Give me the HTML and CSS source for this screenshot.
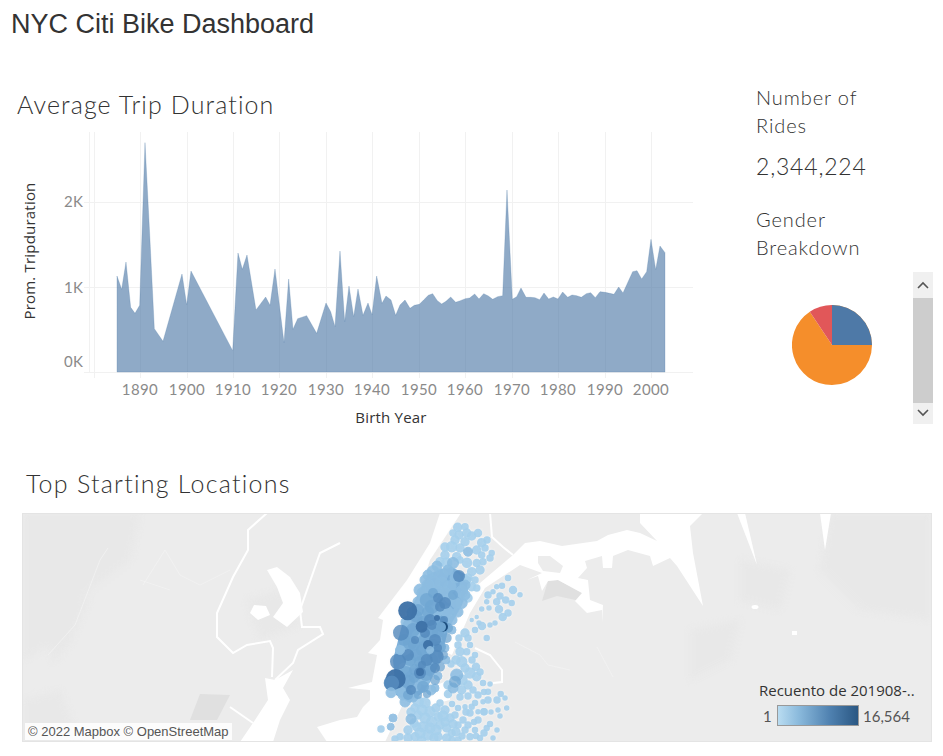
FILE: index.html
```html
<!DOCTYPE html>
<html lang="en">
<head>
<meta charset="utf-8">
<title>NYC Citi Bike Dashboard</title>
<link rel="stylesheet" href="styles.css">
</head>
<body>
<h1 class="page-title">NYC Citi Bike Dashboard</h1>
<div class="top-row">
  <section class="trend">
    <h2 class="viz-title">Average Trip Duration</h2>
    <svg class="chart" viewBox="0 131 720 310" width="720" height="310">
      <g class="grid">
        <path d="M84 202.5H693M84 287.5H693M84 372.5H693"/>
        <path d="M89.5 132V372M94.5 132V378M140.5 132V378M187.5 132V378M233.5 132V378M279.5 132V378M326.5 132V378M372.5 132V378M419.5 132V378M465.5 132V378M512.5 132V378M558.5 132V378M605.5 132V378M651.5 132V378"/>
      </g>
      <polygon class="area" transform="translate(0 80) scale(.33333)" points="351,876 351,588 365,628 378,546 392,682 405,700 419,676 435,188 449,462 463,746 489,784 546,582 560,674 573,573 698,812 714,519 727,568 741,525 768,690 797,651 810,676 825,567 852,788 866,597 879,748 893,716 920,707 950,760 978,669 992,695 1005,740 1020,513 1034,725 1047,618 1061,710 1074,627 1089,706 1104,669 1116,704 1130,588 1146,670 1158,648 1173,660 1187,706 1200,675 1215,660 1230,685 1243,676 1258,673 1271,660 1285,646 1298,641 1312,662 1325,672 1338,664 1352,651 1367,667 1381,662 1396,656 1409,654 1424,642 1437,657 1451,641 1465,648 1478,658 1493,650 1508,647 1521,330 1537,658 1550,650 1563,624 1578,652 1592,652 1605,653 1619,659 1632,639 1646,657 1660,651 1674,657 1688,636 1703,652 1716,645 1730,647 1744,652 1759,641 1772,638 1786,653 1800,635 1815,637 1829,640 1842,643 1856,621 1869,639 1884,606 1898,575 1911,572 1925,597 1940,575 1953,478 1967,569 1980,498 1995,518 1995,876"/>
      <g class="tick">
        <text x="64" y="207">2K</text>
        <text x="64" y="293">1K</text>
        <text x="64" y="367">0K</text>
      </g>
      <g class="tick tick-x">
        <text x="140" y="395">1890</text><text x="187" y="395">1900</text><text x="233" y="395">1910</text><text x="279" y="395">1920</text><text x="326" y="395">1930</text><text x="372" y="395">1940</text><text x="419" y="395">1950</text><text x="465" y="395">1960</text><text x="512" y="395">1970</text><text x="558" y="395">1980</text><text x="605" y="395">1990</text><text x="651" y="395">2000</text>
      </g>
      <text class="axis-title" x="391" y="423">Birth Year</text>
      <text class="axis-title" transform="translate(35 251) rotate(-90)">Prom. Tripduration</text>
    </svg>
  </section>
  <aside class="side">
    <h3 class="side-title">Number of Rides</h3>
    <p class="big-number">2,344,224</p>
    <h3 class="side-title side-gender">Gender Breakdown</h3>
    <div class="pie-wrap">
      <svg class="pie" viewBox="-40 -40 80 80" width="80" height="80">
        <path class="pie-o" d="M0 0V-40A40 40 0 1 1 0 40A40 40 0 0 1 -22.2 -33.3Z"/>
        <path class="pie-r" d="M0 0L-22.2 -33.3A40 40 0 0 1 0 -40Z"/>
        <path class="pie-b" d="M0 0V-40A40 40 0 0 1 40 0Z"/>
      </svg>
      <div class="scrollbar">
        <div class="scroll-btn"><svg viewBox="0 0 20 26" width="20" height="26"><path d="M5 16L10 11L15 16"/></svg></div>
        <div class="scroll-thumb"></div>
        <div class="scroll-btn scroll-btn-down"><svg viewBox="0 0 20 21" width="20" height="21"><path d="M5 7L10 12L15 7"/></svg></div>
      </div>
    </div>
  </aside>
</div>
<section class="map-section">
  <h2 class="viz-title map-title">Top Starting Locations</h2>
  <div class="map">
    <svg class="map-svg" viewBox="23 514 908 227" width="908" height="227">
      <g class="patches">
        <path d="M23 514H140L130 560L90 590L60 640L23 660Z"/>
        <path d="M47 643L77 603L90 598L70 643L53 663Z"/>
        <path d="M120 534L137 520L133 537L127 547Z"/>
        <path d="M246 600L280 590L300 625L260 640Z"/>
        <path d="M830 514H931V620L860 610L820 570Z"/>
        <path d="M740 560L790 570L780 610L740 600Z"/>
        <path d="M690 630L740 620L730 660L690 680Z"/>
        <path d="M23 700L60 690L80 742H23Z"/>
      </g>
      <path class="patch-dark" d="M200 694L230 695L217 720L190 720Z"/>
      <path class="patch-dark" d="M548 581L558 580L582 593L580 601L557 596L542 601Z"/>
      <g class="rivers">
        <path d="M267 513L248 530L248 550L233 577L217 613L217 637L233 653L247 645L270 641L273 648L272 677"/>
        <path d="M340 543L320 553L300 610L302 627L320 627L323 634L298 650L293 663L275 680"/>
        <path d="M230 707L253 723"/>
        <path d="M475 648L490 655L502 670L502 682L493 683"/>
        <path d="M490 513L492 537L503 547L513 555"/>
        <path class="river-thin" d="M143 585L165 550L180 575L200 585L230 570M48 655L75 625L100 560L108 548M140 580L170 590M597 647L613 677M515 642L540 655L548 665L570 670"/>
      </g>
      <g class="water">
        <path d="M440 513H461L430 560L415 610L405 660L405 700L385 742H327L317 727L340 720L357 717L363 707L370 700L370 690L348 688L372 682L377 655L368 653L380 640L383 620L378 618L407 580L430 543Z"/>
        <path d="M265 678L275 680L293 670L283 688L290 700L280 720L273 742H240L255 720L268 700Z"/>
        <path d="M267 570L277 567L290 577L300 593L303 612L287 627L273 617L283 603L277 587Z"/>
        <path d="M254 605L266 606L270 615L258 620L250 613Z"/>
        <path d="M513 555L525 543L540 541L562 546L583 543L597 541L608 535L627 530L640 533L657 541L640 523V513H703L690 526L693 553L703 606L677 566L670 558L653 566L650 556L628 550L613 556L612 568L603 568L602 556L585 561L587 568L578 578L588 580L590 600L603 605L602 623L602 610L587 613L575 601L582 593L558 580L548 581L542 591L538 576L527 580L542 573L520 565L485 588L470 613L452 655L440 650L460 600Z"/>
        <path d="M737 513H745L757 565Z"/>
        <path d="M820 513H831L825 550Z"/>
        <path d="M422 690L450 680L450 700L430 705Z"/>
        <ellipse cx="755" cy="607" rx="3.5" ry="2"/>
        <rect x="792" y="631" width="5" height="4"/>
      </g>
      <path class="gray-land" d="M538 556L550 556L563 566L560 573L543 571L538 563Z"/>
      <g class="bubbles">
        <path class="band-mid" d="M396 695L393 660L402 625L414 602L428 574L450 566L472 578L462 605L448 630L441 660L426 690L410 703Z"/>
        <g class="b1">
          <circle cx="457.7" cy="527.3" r="4"/><circle cx="465" cy="526.7" r="3"/><circle cx="453" cy="533" r="3"/><circle cx="459" cy="535" r="4"/><circle cx="466.7" cy="533" r="4"/><circle cx="471.7" cy="536" r="4"/><circle cx="478" cy="533" r="3.5"/><circle cx="481.7" cy="542.7" r="4"/><circle cx="485" cy="548" r="3"/><circle cx="487" cy="540" r="3"/><circle cx="491.7" cy="553" r="2.5"/><circle cx="490" cy="558" r="3"/><circle cx="465" cy="541.7" r="4"/><circle cx="455" cy="540" r="4"/><circle cx="445" cy="547" r="4"/><circle cx="451.7" cy="546.7" r="5"/><circle cx="460" cy="548" r="4"/><circle cx="476.7" cy="550" r="4"/><circle cx="481.7" cy="555" r="3"/><circle cx="467" cy="562.7" r="4.5"/><circle cx="476.7" cy="563" r="3.5"/><circle cx="480" cy="570" r="4"/><circle cx="483" cy="561.7" r="3"/><circle cx="446.7" cy="563" r="5"/><circle cx="440" cy="561.7" r="4"/><circle cx="445" cy="555" r="4"/><circle cx="456.7" cy="556.7" r="4"/><circle cx="460" cy="560" r="3"/><circle cx="471.7" cy="571.7" r="4"/><circle cx="468" cy="578" r="4"/><circle cx="471.7" cy="586.7" r="4"/><circle cx="475" cy="580" r="3"/><circle cx="476.7" cy="588" r="3"/><circle cx="468" cy="598" r="4"/>
          <circle cx="508" cy="578" r="2.5"/><circle cx="513" cy="590" r="3.5"/><circle cx="520" cy="594.7" r="2"/><circle cx="502" cy="585.7" r="2.5"/><circle cx="496.7" cy="586.7" r="2"/><circle cx="488" cy="595" r="3"/><circle cx="493" cy="591.7" r="2"/><circle cx="500" cy="596" r="3"/><circle cx="505.7" cy="600" r="3"/><circle cx="511.7" cy="603" r="2.5"/><circle cx="496.7" cy="601.7" r="3"/><circle cx="486.7" cy="601.7" r="2"/><circle cx="481.7" cy="609" r="2"/><circle cx="489" cy="608" r="2"/><circle cx="499" cy="609.3" r="3.5"/><circle cx="508" cy="613" r="3"/><circle cx="502.7" cy="617" r="3.5"/><circle cx="495" cy="623" r="2"/><circle cx="490" cy="625" r="2"/><circle cx="476.7" cy="617" r="1.5"/><circle cx="471.7" cy="620" r="1.5"/><circle cx="479" cy="623" r="2"/><circle cx="482" cy="626" r="3.5"/><circle cx="475" cy="630" r="2.5"/><circle cx="465" cy="633" r="4"/><circle cx="468" cy="638" r="3"/><circle cx="459" cy="638" r="3"/><circle cx="486.7" cy="638" r="2.5"/>
          <circle cx="460" cy="651.7" r="4"/><circle cx="466.7" cy="651.7" r="3"/><circle cx="461.7" cy="661.7" r="5"/><circle cx="476" cy="666.7" r="3.5"/><circle cx="470" cy="673" r="5"/><circle cx="476.7" cy="676.7" r="4"/><circle cx="448" cy="694" r="3.5"/><circle cx="461.7" cy="690" r="4"/><circle cx="468" cy="685" r="4"/><circle cx="473" cy="690" r="3"/><circle cx="483" cy="683" r="2.5"/><circle cx="478" cy="695" r="3"/><circle cx="488" cy="691.7" r="2.5"/><circle cx="497" cy="700" r="3"/><circle cx="500.7" cy="694" r="2.5"/><circle cx="505" cy="698" r="2"/><circle cx="506.7" cy="708" r="2"/><circle cx="498" cy="710" r="2"/><circle cx="488" cy="700" r="3"/><circle cx="483" cy="701.7" r="2"/><circle cx="484" cy="711.7" r="3"/><circle cx="478" cy="711.7" r="2"/><circle cx="471.7" cy="706.7" r="2.5"/><circle cx="465" cy="706.7" r="2"/>
          <circle cx="456" cy="660" r="4"/><circle cx="465" cy="668" r="4"/><circle cx="472" cy="660" r="3"/><circle cx="480" cy="672" r="3"/><circle cx="462" cy="680" r="5"/><circle cx="451" cy="664" r="3"/><circle cx="448" cy="685" r="4"/><circle cx="460" cy="697" r="3"/><circle cx="468" cy="696" r="3"/><circle cx="475" cy="703" r="2.5"/><circle cx="484" cy="692" r="2.5"/><circle cx="490" cy="684" r="2"/><circle cx="458" cy="645" r="3"/><circle cx="470" cy="645" r="2.5"/><circle cx="475" cy="655" r="2.5"/>
          <circle cx="418.3" cy="701.7" r="5"/><circle cx="425" cy="703" r="5"/><circle cx="415" cy="708" r="4"/><circle cx="423" cy="726.7" r="5"/><circle cx="408" cy="730" r="4"/><circle cx="381" cy="729" r="3"/><circle cx="430" cy="711.7" r="5"/><circle cx="438.3" cy="716.7" r="4"/><circle cx="445" cy="710" r="4"/><circle cx="450" cy="718" r="4"/><circle cx="455" cy="715" r="3"/><circle cx="418" cy="715" r="4"/><circle cx="431.7" cy="721.7" r="5"/><circle cx="416.7" cy="726.7" r="4"/><circle cx="440" cy="725" r="4"/><circle cx="446.7" cy="728" r="4"/><circle cx="451.7" cy="733" r="3.5"/><circle cx="458" cy="725" r="3"/><circle cx="465" cy="730" r="3"/><circle cx="470" cy="736.7" r="3"/><circle cx="475" cy="730" r="2.5"/><circle cx="480" cy="738" r="2.5"/><circle cx="486.7" cy="728" r="2.5"/><circle cx="493" cy="738" r="2"/><circle cx="463" cy="720" r="3"/><circle cx="470" cy="713" r="3"/><circle cx="478" cy="720" r="3"/><circle cx="484" cy="711.7" r="3"/><circle cx="415" cy="736.7" r="4"/><circle cx="428" cy="735" r="5"/><circle cx="438" cy="736.7" r="4"/><circle cx="446.7" cy="738" r="4"/><circle cx="395" cy="739" r="3"/><circle cx="400" cy="736.7" r="3"/><circle cx="408" cy="738" r="4"/><circle cx="421.7" cy="740" r="4"/><circle cx="458" cy="740" r="3"/>
          <circle cx="411" cy="712" r="4"/><circle cx="422" cy="710" r="5"/><circle cx="436" cy="708" r="4"/><circle cx="443" cy="716" r="5"/><circle cx="425" cy="718" r="5"/><circle cx="414" cy="723" r="4"/><circle cx="436" cy="730" r="5"/><circle cx="445" cy="722" r="4"/><circle cx="453" cy="724" r="4"/><circle cx="456" cy="732" r="4"/><circle cx="462" cy="736" r="3"/><circle cx="430" cy="728" r="5"/><circle cx="420" cy="733" r="5"/><circle cx="434" cy="738" r="4"/><circle cx="452" cy="740" r="3"/><circle cx="468" cy="725" r="3"/><circle cx="474" cy="722" r="2.5"/><circle cx="490" cy="724" r="2.5"/><circle cx="484" cy="733" r="3"/><circle cx="476" cy="736" r="2.5"/><circle cx="466" cy="712" r="3"/><circle cx="458" cy="708" r="2.5"/><circle cx="452" cy="704" r="2.5"/><circle cx="440" cy="703" r="3"/><circle cx="497" cy="730" r="2"/><circle cx="500" cy="716" r="2"/><circle cx="491" cy="712" r="2"/>
        </g>
        <g class="b2">
          <circle cx="468" cy="551.7" r="4.5"/><circle cx="453" cy="563" r="5.5"/><circle cx="433" cy="571.7" r="6"/><circle cx="441.7" cy="575" r="6"/><circle cx="448" cy="570" r="5"/><circle cx="450" cy="586.7" r="6"/><circle cx="461.7" cy="591.7" r="6"/><circle cx="465" cy="585" r="5"/><circle cx="441.7" cy="583" r="6"/><circle cx="433" cy="583" r="7"/><circle cx="425" cy="580" r="5"/><circle cx="423" cy="593" r="6"/><circle cx="461.7" cy="603" r="5.5"/><circle cx="423" cy="605" r="7"/><circle cx="418" cy="601.7" r="5"/><circle cx="431.7" cy="595" r="6"/><circle cx="456.7" cy="675" r="6"/><circle cx="453" cy="688" r="5"/><circle cx="411" cy="719" r="5"/><circle cx="393" cy="718" r="4"/><circle cx="390.7" cy="726.7" r="3.5"/><circle cx="458" cy="612" r="5"/><circle cx="452" cy="620" r="5"/><circle cx="435" cy="688" r="4"/><circle cx="405" cy="702" r="5"/><circle cx="413" cy="697" r="5"/><circle cx="431" cy="690" r="5"/>
          <circle cx="420" cy="590" r="6"/><circle cx="428" cy="585" r="6"/><circle cx="438" cy="590" r="5"/><circle cx="445" cy="592" r="5"/><circle cx="455" cy="578" r="5"/><circle cx="437" cy="566" r="5"/><circle cx="428" cy="575" r="5"/><circle cx="450" cy="598" r="5"/><circle cx="465" cy="595" r="5"/><circle cx="456" cy="603" r="5"/><circle cx="412" cy="612" r="5"/><circle cx="424" cy="612" r="6"/><circle cx="436" cy="612" r="6"/><circle cx="447" cy="612" r="6"/><circle cx="406" cy="622" r="5"/><circle cx="418" cy="636" r="6"/><circle cx="405" cy="650" r="5"/><circle cx="412" cy="662" r="6"/><circle cx="404" cy="668" r="5"/><circle cx="425" cy="680" r="5"/><circle cx="415" cy="685" r="6"/><circle cx="400" cy="690" r="5"/><circle cx="403" cy="695" r="5"/><circle cx="438" cy="676" r="4"/><circle cx="446" cy="660" r="4"/><circle cx="445" cy="648" r="4"/><circle cx="452" cy="630" r="4"/>
        </g>
        <g class="b3">
          <circle cx="455" cy="681.7" r="6"/><circle cx="431.7" cy="606.7" r="7"/><circle cx="416.7" cy="616.7" r="6"/><circle cx="453" cy="595" r="5"/><circle cx="440" cy="623" r="7"/><circle cx="448" cy="628" r="5"/><circle cx="446.7" cy="638" r="5"/><circle cx="440" cy="646.7" r="6"/><circle cx="430" cy="670" r="6"/><circle cx="423" cy="686.7" r="6"/><circle cx="408" cy="681.7" r="7"/><circle cx="440" cy="666.7" r="5"/><circle cx="410" cy="643" r="7"/><circle cx="413" cy="630" r="7"/><circle cx="418" cy="610" r="6"/><circle cx="426.7" cy="600" r="7"/><circle cx="433" cy="593" r="5"/><circle cx="416" cy="655" r="6"/><circle cx="424" cy="640" r="6"/><circle cx="432" cy="632" r="6"/><circle cx="415" cy="670" r="6"/><circle cx="435" cy="680" r="5"/><circle cx="430" cy="650" r="6"/><circle cx="423" cy="622" r="6"/><circle cx="443" cy="655" r="5"/><circle cx="408" cy="695" r="5"/>
          <circle cx="428" cy="612" r="6"/><circle cx="438" cy="632" r="6"/><circle cx="414" cy="645" r="6"/><circle cx="422" cy="650" r="6"/><circle cx="432" cy="660" r="6"/><circle cx="420" cy="662" r="6"/><circle cx="426" cy="675" r="6"/><circle cx="410" cy="660" r="6"/><circle cx="406" cy="672" r="6"/><circle cx="414" cy="678" r="5"/><circle cx="433" cy="644" r="5"/><circle cx="404" cy="640" r="6"/><circle cx="418" cy="695" r="4"/><circle cx="427" cy="694" r="4"/>
        </g>
        <g class="b4">
          <circle cx="459" cy="576" r="6"/><circle cx="445" cy="603" r="6"/><circle cx="440" cy="606.7" r="5"/><circle cx="438" cy="598" r="5"/><circle cx="430" cy="620" r="6"/><circle cx="435" cy="640" r="6"/><circle cx="408" cy="655" r="6"/><circle cx="436.7" cy="656.7" r="7"/><circle cx="426.7" cy="660" r="6"/><circle cx="420" cy="673" r="6"/><circle cx="401" cy="632.7" r="8"/><circle cx="398" cy="661.7" r="8"/><circle cx="391.7" cy="683" r="8"/><circle cx="435" cy="668" r="5"/>
          <circle cx="432" cy="625" r="5"/><circle cx="425" cy="633" r="5"/><circle cx="438" cy="648" r="4"/><circle cx="415" cy="640" r="4"/><circle cx="422" cy="665" r="4"/><circle cx="411" cy="690" r="5"/><circle cx="444" cy="620" r="4"/>
        </g>
        <g class="b5">
          <circle cx="421.7" cy="626.7" r="6"/><circle cx="428" cy="645" r="5"/><circle cx="420" cy="672" r="4"/><circle cx="407.7" cy="610.7" r="9.5"/><circle cx="395.7" cy="679" r="10"/><circle cx="437" cy="618" r="3"/>
        </g>
        <circle class="b6" cx="443" cy="626.7" r="5"/>
        <circle class="b3" cx="441" cy="627" r="5"/>
        <circle class="b4" cx="391.7" cy="683" r="7.5"/>
        <g class="b2">
          <circle cx="391" cy="692.7" r="5"/><circle cx="400" cy="650" r="4.5"/><circle cx="430" cy="650" r="3.5"/>
        </g>
      </g>
    </svg>
    <div class="attribution">© 2022 Mapbox © OpenStreetMap</div>
    <div class="legend">
      <div class="legend-title">Recuento de 201908-..</div>
      <div class="legend-scale">
        <span class="legend-min">1</span>
        <span class="legend-bar"></span>
        <span class="legend-max">16,564</span>
      </div>
    </div>
  </div>
</section>
</body>
</html>
```
FILE: styles.css
```css
* { box-sizing: border-box; }
html, body { margin: 0; padding: 0; background: #fff; }
body { width: 943px; height: 756px; overflow: hidden; font-family: "Lato", "Noto Sans", sans-serif; color: #333; }

.page-title {
  margin: 0;
  padding: 8px 0 0 11px;
  height: 85px;
  font: 400 27px/32px "Liberation Sans", Arial, sans-serif;
  color: #333;
}

.top-row { display: flex; height: 351px; }
.trend { width: 720px; flex: none; }
.viz-title {
  margin: 0;
  padding-left: 17px;
  font: 300 25px/38px "Lato", "Noto Sans", sans-serif;
  letter-spacing: 1.1px;
  color: #333;
}
.chart { display: block; margin-top: 8px; }
.grid path { fill: none; stroke: #f1f1f1; stroke-width: 1; }
.area { fill: #4e79a7; fill-opacity: .63; stroke: #4e79a7; stroke-width: 3; stroke-opacity: .25; }
.tick text { font: 400 15px "Lato", sans-serif; fill: #8a8a8a; letter-spacing: .4px; }
.tick text { text-anchor: start; }
.tick-x text { text-anchor: middle; }
.axis-title { font: 400 15px "Open Sans", sans-serif; fill: #333; text-anchor: middle; letter-spacing: .2px; }

.side { padding: 0 0 0 36px; flex: 1; min-width: 0; margin-top: -2px; }
.side-title {
  margin: 0;
  width: 130px;
  font: 300 20px/28px "Lato", "Noto Sans", sans-serif;
  letter-spacing: .9px;
  color: #333;
}
.big-number {
  margin: 13px 0 0;
  font: 300 23px/28px "Lato", "Noto Sans", sans-serif;
  letter-spacing: .8px;
  color: #333;
}
.side-gender { margin-top: 25px; }
.pie-wrap { position: relative; height: 160px; }
.pie { position: absolute; left: 36px; top: 44px; }
.scrollbar {
  position: absolute;
  left: 157px;
  top: 11px;
  width: 20px;
  height: 152px;
  display: flex;
  flex-direction: column;
  background: #f0f0f0;
}
.scroll-btn { height: 26px; flex: none; }
.scroll-btn-down { height: 21px; }
.scroll-btn svg { display: block; }
.scroll-btn path { fill: none; stroke: #555; stroke-width: 1.6; }
.scroll-thumb { flex: 1; background: #cdcdcd; }
.pie-o { fill: #f58e2b; }
.pie-r { fill: #e15759; }
.pie-b { fill: #4e79a7; }

.map-section { padding-left: 22px; }
.map-title { padding-left: 4px; height: 49px; margin-top: 28px; letter-spacing: 1.25px; }
.map {
  position: relative;
  width: 910px;
  height: 229px;
  border: 1px solid #e4e4e4;
  background: #ececec;
  overflow: hidden;
}
.map-svg { display: block; }
.patches { fill: #e8e8e8; filter: blur(3px); }
.patch-dark { fill: #e0e0e0; }
.gray-land { fill: #ececec; }
.rivers path { fill: none; stroke: #fff; stroke-width: 2; }
.rivers .river-thin { stroke-width: .7; stroke: #f4f4f4; }
.water { fill: #fff; }
.bubbles { filter: drop-shadow(0 0 1.5px #f8f8f8); }
.band-mid { fill: #7fb1da; }
.b1 { fill: #a6d0ec; stroke: #a6d0ec; stroke-width: 1.5; }
.b1 circle { opacity: .92; }
.b2 { fill: #8dbde1; stroke: #8dbde1; stroke-width: 1; }
.b2 circle { opacity: .9; }
.b3 { fill: #6fa5d1; }
.b3 circle { opacity: .75; }
.b4 { fill: #5388bb; }
.b4 circle { opacity: .8; }
.b5 { fill: #3d71a6; }
.b5 circle { opacity: .95; }
.b6 { fill: #1c4d7d; }

.attribution {
  position: absolute;
  left: 2px;
  top: 209px;
  height: 17px;
  padding: 0 3px;
  background: rgba(255, 255, 255, .85);
  font: 400 13px/17px "Liberation Sans", Arial, sans-serif;
  color: #555;
}
.legend { position: absolute; left: 736px; top: 166px; width: 170px; }
.legend-title { font: 400 15px/20px "Open Sans", sans-serif; color: #333; white-space: nowrap; }
.legend-scale { display: flex; align-items: center; margin-top: 5px; margin-left: 4px; font: 400 15px/20px "Lato", sans-serif; color: #555; }
.legend-min { width: 14px; }
.legend-bar {
  width: 82px;
  height: 21px;
  border: 1px solid #999;
  background: linear-gradient(90deg, #b9dcf1, #8cbbdd 25%, #4f81b0 65%, #2a5783);
  margin-right: 4px;
}
```
